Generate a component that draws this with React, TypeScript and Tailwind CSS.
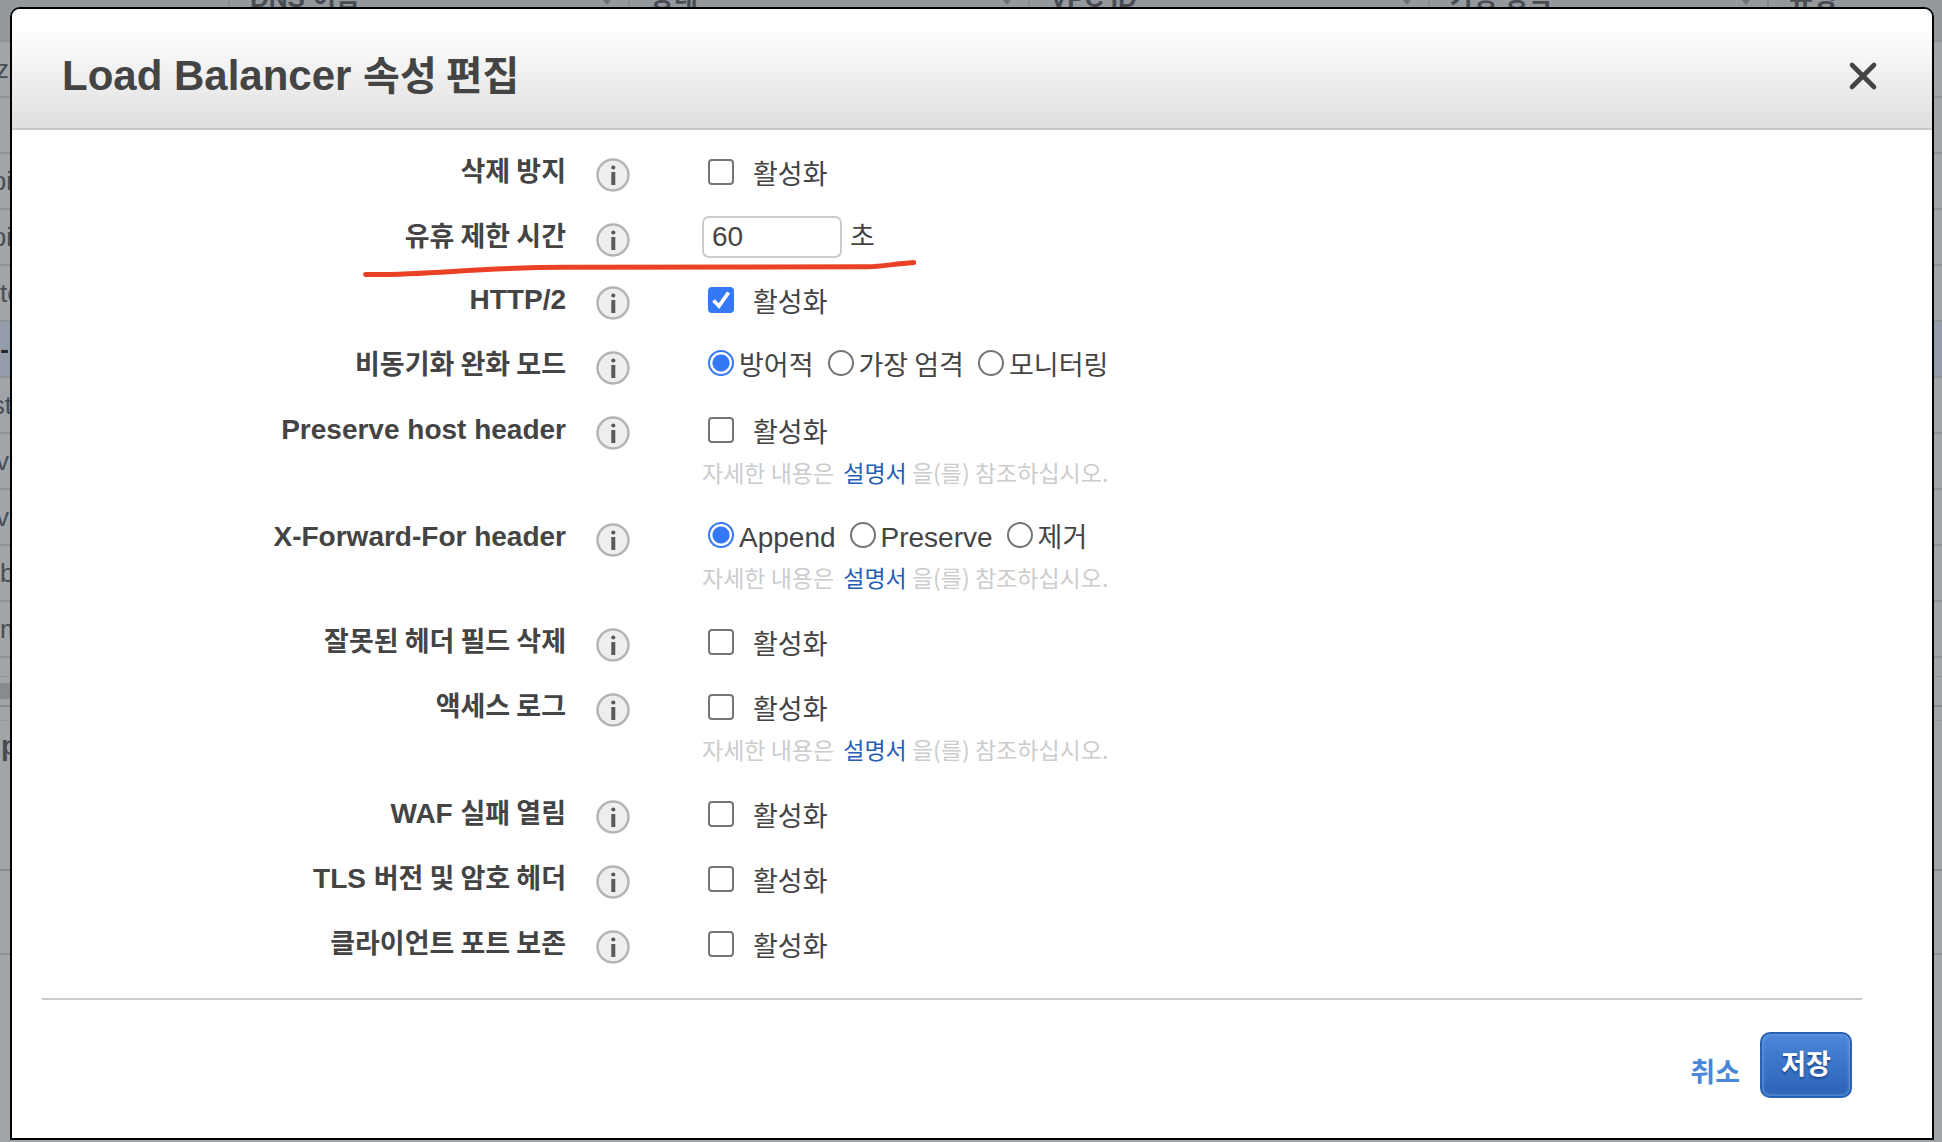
import React from "react";

type Row = {
  id: string;
  label: string;
  kind: "check" | "number" | "radio";
  checked?: boolean;
  options?: string[];
  hint?: boolean;
  marked?: boolean;
};

const rows: Row[] = [
  { id: "deletion", label: "삭제 방지", kind: "check" },
  { id: "idle", label: "유휴 제한 시간", kind: "number", marked: true },
  { id: "http2", label: "HTTP/2", kind: "check", checked: true },
  { id: "desync", label: "비동기화 완화 모드", kind: "radio", options: ["방어적", "가장 엄격", "모니터링"] },
  { id: "host", label: "Preserve host header", kind: "check", hint: true },
  { id: "xff", label: "X-Forward-For header", kind: "radio", options: ["Append", "Preserve", "제거"], hint: true },
  { id: "drop", label: "잘못된 헤더 필드 삭제", kind: "check" },
  { id: "logs", label: "액세스 로그", kind: "check", hint: true },
  { id: "waf", label: "WAF 실패 열림", kind: "check" },
  { id: "tls", label: "TLS 버전 및 암호 헤더", kind: "check" },
  { id: "port", label: "클라이언트 포트 보존", kind: "check" },
];

const listHead = ["DNS 이름", "상태", "VPC ID", "가용 영역", "유형"];
const listRows = [
  { name: "z" },
  { name: "" },
  { name: "pi", wide: true },
  { name: "pi", wide: true },
  { name: "te", start: true },
  { name: "-", active: true },
  { name: "st", wide: true },
  { name: "v" },
  { name: "v" },
  { name: "b", start: true },
  { name: "m", start: true },
];

// Hangul runs are set a little smaller than the Latin text beside them
function Mixed({ text, size = "text-[27px]" }: { text: string; size?: string }) {
  return (
    <>
      {text.split(/([가-힣][가-힣 ]*)/).filter(Boolean).map((part, i) =>
        /[가-힣]/.test(part) ? (
          <span key={i} className={`font-['Noto_Sans_CJK_KR',sans-serif] leading-none ${size}`}>{part}</span>
        ) : (
          <React.Fragment key={i}>{part}</React.Fragment>
        )
      )}
    </>
  );
}

function InfoButton({ label }: { label: string }) {
  return (
    <button type="button" aria-label={label} className="mt-[7px] block size-[34px]">
      <svg viewBox="0 0 34 34" className="size-full">
        <circle cx="17" cy="17" r="15.5" fill="#eeeeee" stroke="#b4b4b4" strokeWidth="2.5" />
        <circle cx="17.3" cy="9.5" r="2.1" fill="#5a5a5a" />
        <path d="M17.3 14V27" stroke="#5a5a5a" strokeWidth="4" />
      </svg>
    </button>
  );
}

function Check({ row }: { row: Row }) {
  return (
    <div className="flex items-start pt-[7px]">
      <span className="relative mt-px ml-1.5 size-[26px]">
        <input
          id={row.id}
          type="checkbox"
          defaultChecked={row.checked}
          className="peer block size-[26px] appearance-none rounded-[4px] border-2 border-[#757575] bg-white checked:border-[#3478f6] checked:bg-[#3478f6]"
        />
        <svg viewBox="0 0 26 26" className="pointer-events-none absolute inset-0 hidden peer-checked:block">
          <path d="M5.5 13.5L11 19L20.5 5.5" fill="none" stroke="#fff" strokeWidth="3.8" />
        </svg>
      </span>
      <label htmlFor={row.id} className="ml-[19px]"><Mixed text="활성화" /></label>
    </div>
  );
}

function Radios({ row }: { row: Row }) {
  return (
    <div role="radiogroup" aria-label={row.label} className="flex items-start gap-[14px] pt-[5px] pl-1.5">
      {row.options!.map((o, i) => (
        <label key={o} className="flex items-start gap-[5px]">
          <input
            type="radio"
            name={row.id}
            defaultChecked={i === 0}
            className="mt-px size-[26px] appearance-none rounded-full border-2 border-[#757575] bg-white checked:border-[#3478f6] checked:bg-[radial-gradient(circle,#3478f6_0_8px,#fff_9px)]"
          />
          <span><Mixed text={o} /></span>
        </label>
      ))}
    </div>
  );
}

function Hint() {
  return (
    <p className="mt-[7px] mb-[5px] font-['Noto_Sans_CJK_KR',sans-serif] text-[23px] leading-[30px] text-[#cccccc]">
      자세한 내용은 <a href="#docs" className="ml-1 text-[#245eb8]">설명서</a> 을(를) 참조하십시오.
    </p>
  );
}

function FormRow({ row }: { row: Row }) {
  return (
    <div className={`relative grid grid-cols-[554px_34px_1fr] ${row.kind === "number" ? "pb-[21px]" : "pb-6"}`}>
      <label htmlFor={row.kind === "radio" ? undefined : row.id} className="pt-1 text-right font-bold">
        <Mixed text={row.label} />
      </label>
      <div className="ml-[30px]"><InfoButton label={row.label} /></div>
      <div className="ml-[102px]">
        {row.kind === "check" && <Check row={row} />}
        {row.kind === "radio" && <Radios row={row} />}
        {row.kind === "number" && (
          <div className="flex items-center gap-2">
            <input
              id={row.id}
              type="text"
              defaultValue="60"
              className="h-[42px] w-[140px] rounded-[7px] border-2 border-[#cccccc] bg-white px-2 text-[28px]"
            />
            <span><Mixed text="초" /></span>
          </div>
        )}
        {row.hint && <Hint />}
      </div>
      {row.marked && (
        <svg viewBox="0 0 556 20" className="pointer-events-none absolute top-[42px] left-[351px] h-5 w-[556px]">
          <path
            d="M2.5 16.5C70 17.5 110 9.5 205 9.3L515 8.7C530 8.7 540 6 562 4.5"
            transform="scale(.98 1)"
            fill="none"
            stroke="#ea4025"
            strokeWidth="5"
            strokeLinecap="round"
          />
        </svg>
      )}
    </div>
  );
}

function Backdrop() {
  return (
    <div aria-hidden="true" className="absolute inset-0 overflow-hidden bg-[#a0a5aa] text-[#484d53]">
      <table className="-mt-11 w-full table-fixed border-separate border-spacing-0">
        <colgroup>
          <col className="w-[228px]" />
          <col className="w-[400px]" />
          <col className="w-[400px]" />
          <col className="w-[400px]" />
          <col className="w-[339px]" />
          <col />
        </colgroup>
        <thead>
          <tr className="bg-[#94999e] text-[26px]">
            <th className="h-[84px] p-0" />
            {listHead.map((h, i) => (
              <th key={h} className="h-[84px] border-l-2 border-[#84898e] p-0 text-left">
                <div className="flex items-center justify-between pr-4 pl-5">
                  <span className="whitespace-nowrap"><Mixed text={h} size="text-[26px]" /></span>
                  {i < 4 && (
                    <svg viewBox="0 0 10 6" className="mt-2 h-1.5 w-2.5"><path d="M0 0H10L5 6Z" fill="#6d7277" /></svg>
                  )}
                </div>
              </th>
            ))}
          </tr>
        </thead>
        <tbody>
          {listRows.map((r, i) => (
            <tr key={i} className={r.active ? "bg-[#959daa]" : ""}>
              <td colSpan={6} className={`h-14 border-t-2 border-[#8e9398] p-0 ${r.active ? "font-bold text-[#23282e]" : ""}`}>
                <div className={`flex text-[26px] ${r.wide ? "w-3" : "w-[9px]"} ${r.start ? "justify-start" : "justify-end"}`}>
                  {r.name}
                </div>
              </td>
            </tr>
          ))}
        </tbody>
      </table>
      <div className="h-5 border-t-2 border-[#8e9398]" />
      <div className="h-[7px] border-t border-[#959a9f]" />
      <div className="h-4 w-2.5 bg-[#868b90]" />
      <div className="mt-1.5 h-[15px] border-t-2 border-[#84898e]" />
      <div className="h-[149px] border-t border-[#959a9f] pt-2 font-bold"><div className="flex w-[18px] justify-end">p</div></div>
      <div className="h-[84px] border-t-2 border-[#84898e]" />
      <div className="border-t-2 border-[#8e9398]" />
    </div>
  );
}

export default function App() {
  return (
    <div className="relative min-h-screen pt-[7px] pr-2 pb-0.5 pl-2.5 font-['Liberation_Sans','Noto_Sans_CJK_KR',sans-serif] text-[28px] leading-[34px] text-[#444444]">
      <Backdrop />
      <section role="dialog" aria-labelledby="title" className="relative overflow-hidden rounded-t-[10px] border-2 border-black bg-white">
        <header className="flex h-[121px] items-center justify-between border-b-2 border-[#c8c8c8] bg-linear-to-b from-white from-15% to-[#dfdfdf] pr-[54px] pl-[50px]">
          <h1 id="title" className="pt-3.5 text-[42px] leading-[48px] font-bold">
            <Mixed text="Load Balancer 속성 편집" size="text-[40px]" />
          </h1>
          <button type="button" aria-label="닫기" className="mt-3.5">
            <svg viewBox="0 0 30 30" className="size-[30px]">
              <path d="M4 4L26 26M26 4L4 26" stroke="#444" strokeWidth="4.6" strokeLinecap="round" />
            </svg>
          </button>
        </header>

        <form onSubmit={(e) => e.preventDefault()}>
          <div className="pt-[21px]">
            {rows.map((r) => <FormRow key={r.id} row={r} />)}
          </div>
          <footer className="mt-2.5 mr-[70px] ml-[30px] flex items-center justify-end gap-5 border-t-2 border-[#cccccc] pt-8 pr-2.5 pb-10 font-bold">
            <a href="#cancel" className="pt-4 text-[#4a87d9]"><Mixed text="취소" /></a>
            <button
              type="submit"
              className="h-[66px] w-[92px] rounded-[10px] border-2 border-[#2a62b3] bg-linear-to-b from-[#4c87da] to-[#2b62b5] text-white shadow-[inset_0_0_3px_1px_#6b9ade] text-shadow-[0_2px_2px_#1d4a8f]"
            >
              <Mixed text="저장" />
            </button>
          </footer>
        </form>
      </section>
    </div>
  );
}
